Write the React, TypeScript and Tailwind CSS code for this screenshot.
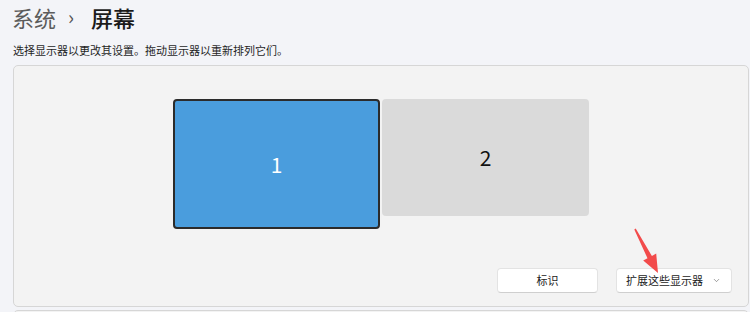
import { ChevronDown } from "lucide-react";

const font = { fontFamily: '"Noto Sans CJK SC", "Noto Sans", sans-serif' };

function Monitor({ n, active }: { n: string; active?: boolean }) {
  if (active) {
    return (
      <div className="flex h-[130px] w-[207px] items-center justify-center rounded-[4px] border-2 border-[#2b2b2b] bg-[#4a9ddd] pb-[2px] pt-[4px] text-[21px] text-white">
        {n}
      </div>
    );
  }
  return (
    <div className="flex h-[117px] w-[207px] items-center justify-center rounded-[4px] bg-[#dadada] text-[21px] text-[#111]">
      {n}
    </div>
  );
}

function Arrow() {
  return (
    <svg
      className="pointer-events-none absolute left-0 top-0"
      width="750"
      height="312"
      viewBox="0 0 750 312"
    >
      <polygon
        points="635.7,228.6 651.9,255.9 656.2,253.6 658,273 643.2,260.6 647.5,258.3 634.3,229.4"
        fill="#f24b4b"
      />
    </svg>
  );
}

export default function App() {
  return (
    <div
      className="relative h-[312px] w-[750px] overflow-hidden bg-[#f3f4f8] pl-[12px] pr-[1px]"
      style={font}
    >
      <div className="flex h-[33px] items-center pt-[1px]">
        <span className="text-[22px] leading-none text-[#5c5c5c]">系统</span>
        <span className="ml-[12px] mr-[17px] text-[20px] leading-none text-[#555]">
          ›
        </span>
        <span className="text-[22px] font-medium leading-none text-[#1b1b1b]">
          屏幕
        </span>
      </div>
      <div className="ml-[1px] mt-[9px] text-[11px] leading-[16px] text-[#1f1f1f]">
        选择显示器以更改其设置。拖动显示器以重新排列它们。
      </div>
      <div className="ml-[1px] mt-[7px] flex h-[242px] flex-col rounded-[5px] border border-[#d6d6d6] bg-[#f3f3f3]">
        <div className="flex justify-center gap-[2px] pt-[33px]">
          <Monitor n="1" active />
          <Monitor n="2" />
        </div>
        <div className="mt-[39px] flex justify-end gap-[18px] pr-[16px]">
          <button className="flex h-[25px] w-[101px] items-center justify-center rounded-[4px] border border-[#e3e3e3] border-b-[#cfcfcf] bg-white text-[11px] text-[#1b1b1b]">
            标识
          </button>
          <button className="flex h-[25px] w-[116px] items-center justify-between rounded-[4px] border border-[#e3e3e3] border-b-[#cfcfcf] bg-white pl-[9px] pr-[10px] text-[11px] text-[#1b1b1b]">
            扩展这些显示器
            <ChevronDown className="h-[9px] w-[9px] text-[#555]" strokeWidth={1.5} />
          </button>
        </div>
      </div>
      <div className="ml-[1px] mt-[3px] h-[20px] rounded-t-[5px] border border-[#d6d6d6] bg-[#f3f3f3]" />
      <Arrow />
    </div>
  );
}
